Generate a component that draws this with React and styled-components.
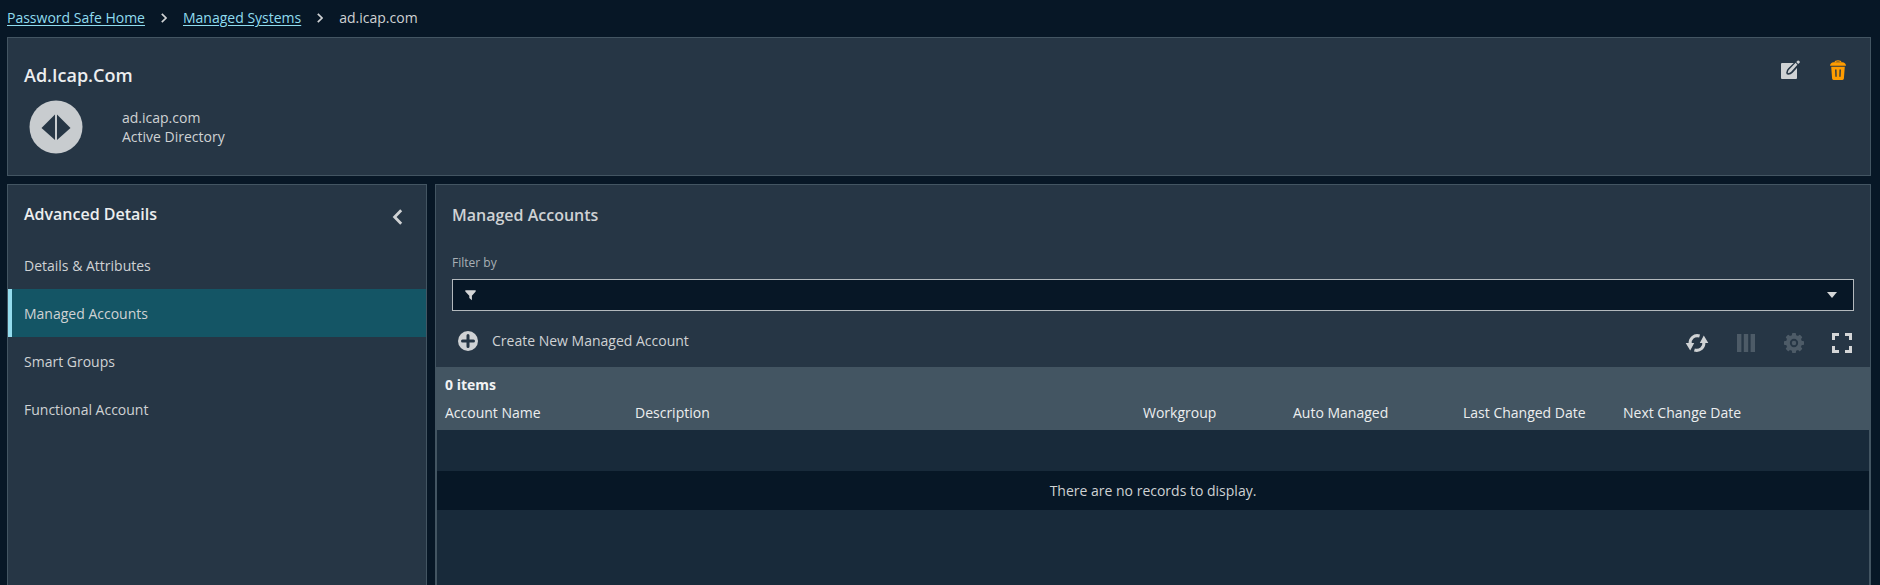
import React, { useState } from 'react';
import styled, { createGlobalStyle } from 'styled-components';

const navItems = ['Details & Attributes', 'Managed Accounts', 'Smart Groups', 'Functional Account'];

const columns = [
  { name: 'Account Name', width: '190px' },
  { name: 'Description' },
  { name: 'Workgroup', width: '150px' },
  { name: 'Auto Managed', width: '170px' },
  { name: 'Last Changed Date', width: '160px' },
  { name: 'Next Change Date', width: '254px' },
];

const Separator = () => (
  <svg width='6' height='10' viewBox='0 0 6 10' fill='none' stroke='#cfd2d4' strokeWidth='1.7' aria-hidden='true'>
    <path d='M0.8 0.8 L5 5 L0.8 9.2' />
  </svg>
);

const DirectoryIcon = () => (
  <svg width='54' height='54' viewBox='0 0 54 54' aria-hidden='true'>
    <circle cx='27' cy='27' r='26.5' fill='#c8cccf' />
    <path d='M26 14.5 V40 L12.5 28 Z' fill='#263645' />
    <path d='M28 14.5 V40 L41.5 28 Z' fill='#263645' />
  </svg>
);

const EditIcon = () => (
  <svg width='20' height='20' viewBox='0 0 20 20' aria-hidden='true'>
    <rect x='1' y='3' width='16' height='16' rx='1' fill='#cfd2d4' />
    <path
      d='M17.5 2.2 L9.6 9.8 C8.6 10.8 8.2 11.8 8.2 12.8 C9.4 12.8 10.4 12.4 11.2 11.5 L18.4 3.4'
      fill='#263645'
      stroke='#263645'
      strokeWidth='4'
      strokeLinejoin='round'
    />
    <path d='M15.6 2.8 L17.4 4.7 L11.2 11.8 C10.4 12.7 9 13.2 7.8 13.2 C7.8 12 8.2 10.6 9.2 9.6 Z' fill='#cfd2d4' />
    <path d='M16.3 2.1 L17.6 0.8 C18.6 0 20.4 1.6 19.6 2.8 L18.2 4.1 Z' fill='#cfd2d4' />
  </svg>
);

const TrashIcon = () => (
  <svg width='16' height='20' viewBox='0 0 16 20' aria-hidden='true'>
    <path d='M4.8 2.4 C5.4 0.4 10.6 0.4 11.2 2.4' fill='none' stroke='#ff9c00' strokeWidth='1.3' />
    <path d='M0 5.8 C0.2 3.4 1.6 2.2 3.6 2.2 H12.4 C14.4 2.2 15.8 3.4 16 5.8 Z' fill='#ff9c00' />
    <path
      fillRule='evenodd'
      d='M1.2 6.8 H14.8 L13.9 18.6 Q13.8 20 12.4 20 H3.6 Q2.2 20 2.1 18.6 Z M5.1 9.6 L5.4 16.8 H6.7 L6.5 9.6 Z M9.5 9.6 L9.3 16.8 H10.6 L10.9 9.6 Z'
      fill='#ff9c00'
    />
  </svg>
);

const CollapseIcon = () => (
  <svg width='11' height='16' viewBox='0 0 11 16' fill='none' stroke='#cfd2d4' strokeWidth='2.8' aria-hidden='true'>
    <path d='M9.2 1.2 L2.6 8 L9.2 14.8' />
  </svg>
);

const FunnelIcon = () => (
  <svg width='11' height='11' viewBox='0 0 11 11' fill='#d4d6d7' aria-hidden='true'>
    <path d='M0.3 0.3 H10.7 V1.6 L6.9 5.8 V10.2 L4.3 8 V5.8 L0.3 1.6 Z' />
  </svg>
);

const PlusIcon = () => (
  <svg width='20' height='20' viewBox='0 0 20 20' aria-hidden='true'>
    <circle cx='10' cy='10' r='10' fill='#cfd2d4' />
    <path d='M10 4.5 V15.5 M4.5 10 H15.5' stroke='#263645' strokeWidth='3' strokeLinecap='round' />
  </svg>
);

const RefreshIcon = () => (
  <svg width='24' height='20' viewBox='0 0 24 20' aria-hidden='true'>
    <g fill='none' stroke='#cfd2d4' strokeWidth='3'>
      <path d='M5.2 11 C4.4 5.6 9.2 1.4 14.6 3' />
      <path d='M18.8 9 C19.6 14.4 14.8 18.6 9.4 17' />
    </g>
    <path d='M0.7 10 H9.2 L5.2 17.4 Z M14.8 10 H23.3 L18.8 2.6 Z' fill='#cfd2d4' />
  </svg>
);

const ColumnsIcon = () => (
  <svg width='19' height='18' viewBox='0 0 19 18' fill='#4d5b67' aria-hidden='true'>
    <path d='M0 0 H4.4 V18 H0 Z M6.8 0 H11.2 V18 H6.8 Z M13.6 0 H18 V18 H13.6 Z' />
  </svg>
);

const GearIcon = () => (
  <svg width='20' height='20' viewBox='0 0 20 20' aria-hidden='true'>
    <g fill='#4d5b67'>
      <circle cx='10' cy='10' r='8' />
      {[0, 45, 90, 135].map((angle) => (
        <rect key={angle} x='8' y='0' width='4' height='20' rx='0.8' transform={`rotate(${angle} 10 10)`} />
      ))}
    </g>
    <circle cx='10' cy='10' r='3.2' fill='none' stroke='#263645' strokeWidth='1.9' />
  </svg>
);

const FullscreenIcon = () => (
  <svg width='20' height='20' viewBox='0 0 20 20' fill='none' stroke='#d4d6d7' strokeWidth='3' aria-hidden='true'>
    <path d='M1.5 7 V1.5 H7 M13 1.5 H18.5 V7 M18.5 13 V18.5 H13 M7 18.5 H1.5 V13' />
  </svg>
);

const App = () => {
  const [active, setActive] = useState('Managed Accounts');
  const [filter, setFilter] = useState('');

  return (
    <Page>
      <GlobalStyle />
      <Breadcrumb aria-label='Breadcrumb'>
        <a href='#home'>Password Safe Home</a>
        <Separator />
        <a href='#systems'>Managed Systems</a>
        <Separator />
        <span>ad.icap.com</span>
      </Breadcrumb>

      <SystemHeader>
        <div>
          <SystemTitle>Ad.Icap.Com</SystemTitle>
          <SystemInfo>
            <DirectoryIcon />
            <div>
              <p>ad.icap.com</p>
              <p>Active Directory</p>
            </div>
          </SystemInfo>
        </div>
        <HeaderActions>
          <IconButton aria-label='Edit'>
            <EditIcon />
          </IconButton>
          <IconButton aria-label='Delete'>
            <TrashIcon />
          </IconButton>
        </HeaderActions>
      </SystemHeader>

      <Content>
        <Sidebar>
          <SidebarHeader>
            <PanelTitle $bright>Advanced Details</PanelTitle>
            <IconButton aria-label='Collapse'>
              <CollapseIcon />
            </IconButton>
          </SidebarHeader>
          {navItems.map((item) => (
            <NavButton key={item} $active={item === active} onClick={() => setActive(item)}>
              {item}
            </NavButton>
          ))}
        </Sidebar>

        <Main>
          <MainHeader>
            <PanelTitle>Managed Accounts</PanelTitle>
            <FilterLabel htmlFor='filter'>Filter by</FilterLabel>
            <FilterBox>
              <FunnelIcon />
              <input id='filter' type='text' value={filter} onChange={(e) => setFilter(e.target.value)} />
              <CaretButton aria-label='Show filters' />
            </FilterBox>
          </MainHeader>

          <Toolbar>
            <CreateButton>
              <PlusIcon />
              Create New Managed Account
            </CreateButton>
            <GridActions>
              <IconButton aria-label='Refresh'>
                <RefreshIcon />
              </IconButton>
              <IconButton aria-label='Columns' disabled>
                <ColumnsIcon />
              </IconButton>
              <IconButton aria-label='Settings' disabled>
                <GearIcon />
              </IconButton>
              <IconButton aria-label='Full screen'>
                <FullscreenIcon />
              </IconButton>
            </GridActions>
          </Toolbar>

          <Grid>
            <ItemCount>0 items</ItemCount>
            <Table>
              <colgroup>
                {columns.map((col) => (
                  <Column key={col.name} $width={col.width} />
                ))}
              </colgroup>
              <thead>
                <tr>
                  {columns.map((col) => (
                    <th key={col.name}>{col.name}</th>
                  ))}
                </tr>
              </thead>
              <tbody>
                <SpacerRow>
                  <td colSpan={columns.length} />
                </SpacerRow>
                <EmptyRow>
                  <td colSpan={columns.length}>There are no records to display.</td>
                </EmptyRow>
              </tbody>
            </Table>
          </Grid>
        </Main>
      </Content>
    </Page>
  );
};

export default App;

const GlobalStyle = createGlobalStyle`
  *, *::before, *::after {
    box-sizing: border-box;
  }

  body {
    margin: 0;
    background: #071726;
    color: #cfd2d4;
    font-family: 'Open Sans', 'Noto Sans', sans-serif;
    font-size: 14px;
    line-height: 19px;
  }

  h1, h2, p {
    margin: 0;
  }

  button, input {
    font: inherit;
    color: inherit;
    background: none;
    border: none;
    padding: 0;
  }

  button {
    cursor: pointer;
  }

  svg {
    display: block;
    flex: none;
  }
`;

const Page = styled.div`
  display: flex;
  flex-direction: column;
  min-height: 100vh;
  padding: 0 9px 0 7px;
`;

const Breadcrumb = styled.nav`
  display: flex;
  align-items: center;
  gap: 16px;
  height: 37px;
  padding-bottom: 2px;

  a {
    color: #8fdcef;
    text-underline-offset: 2px;
  }
`;

const Panel = styled.section`
  background: #263645;
  border: 1px solid #435562;
`;

const SystemHeader = styled(Panel)`
  display: flex;
  justify-content: space-between;
  min-height: 139px;
  padding: 22px 24px 20px 16px;
`;

const SystemTitle = styled.h1`
  color: #eceeef;
  font-size: 18px;
  font-weight: 600;
  line-height: 30px;
`;

const SystemInfo = styled.div`
  display: flex;
  align-items: center;
  gap: 39px;
  margin-top: 10px;
  padding-left: 5px;
`;

const HeaderActions = styled.div`
  display: flex;
  align-items: flex-start;
  gap: 30px;
`;

const IconButton = styled.button`
  display: flex;

  &:disabled {
    cursor: default;
  }
`;

const Content = styled.div`
  display: grid;
  grid-template-columns: 420px 1fr;
  gap: 8px;
  flex: 1;
  margin-top: 8px;
`;

const Sidebar = styled(Panel)`
  border-bottom: none;
`;

const SidebarHeader = styled.div`
  display: flex;
  align-items: flex-end;
  justify-content: space-between;
  height: 56px;
  padding: 0 23px 16px 16px;
`;

const PanelTitle = styled.h2`
  color: ${({ $bright }) => ($bright ? '#eceeef' : '#cfd2d4')};
  font-size: 16px;
  font-weight: 600;
  line-height: 22px;
`;

const NavButton = styled.button`
  display: block;
  width: 100%;
  height: 48px;
  padding-left: 12px;
  border-left: 4px solid ${({ $active }) => ($active ? '#94dcee' : 'transparent')};
  background: ${({ $active }) => ($active ? '#145565' : 'none')};
  text-align: left;
`;

const Main = styled(Panel)`
  display: flex;
  flex-direction: column;
  border-bottom: none;
`;

const MainHeader = styled.div`
  padding: 19px 16px 0;
`;

const FilterLabel = styled.label`
  display: block;
  margin-top: 29px;
  color: #a9b0b5;
  font-size: 12px;
  line-height: 16px;
`;

const FilterBox = styled.div`
  display: flex;
  align-items: center;
  height: 32px;
  margin-top: 8px;
  padding: 0 16px 0 12px;
  background: #071726;
  border: 1px solid #b3b9bd;

  input {
    flex: 1;
    min-width: 0;
    padding: 0 12px;
    outline: none;
  }
`;

const CaretButton = styled.button`
  border: 5px solid transparent;
  border-top: 6px solid #d4d6d7;
  border-bottom: none;
`;

const Toolbar = styled.div`
  display: flex;
  align-items: flex-start;
  justify-content: space-between;
  height: 56px;
  padding: 20px 18px 0 22px;
`;

const CreateButton = styled.button`
  display: flex;
  align-items: flex-start;
  gap: 14px;
`;

const GridActions = styled.div`
  display: flex;
  align-items: center;
  gap: 28px;
  padding-top: 2px;
`;

const Grid = styled.div`
  flex: 1;
  background: #182a3a;
  border: solid #435562;
  border-width: 0 1px;
`;

const ItemCount = styled.div`
  height: 30px;
  padding: 8px 8px 0;
  background: #435562;
  color: #f2f3f4;
  font-weight: 700;
`;

const Table = styled.table`
  width: 100%;
  border-collapse: collapse;
  table-layout: fixed;

  th {
    height: 33px;
    padding: 0 8px 2px;
    background: #435562;
    color: #eceeef;
    font-weight: 400;
    text-align: left;
  }

  td {
    padding: 0 8px;
  }
`;

const Column = styled.col`
  width: ${({ $width }) => $width || 'auto'};
`;

const SpacerRow = styled.tr`
  height: 41px;
`;

const EmptyRow = styled.tr`
  height: 39px;
  background: #071726;
  text-align: center;
`;
